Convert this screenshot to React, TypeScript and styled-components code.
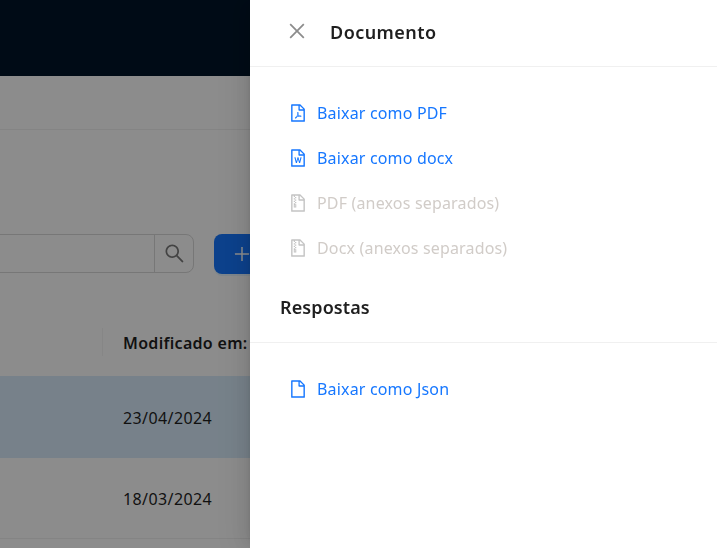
import styled, { createGlobalStyle } from 'styled-components';
import {
  AiOutlineClose,
  AiOutlineFile,
  AiOutlineFilePdf,
  AiOutlineFileWord,
  AiOutlineFileZip,
  AiOutlinePlus,
  AiOutlineSearch,
} from 'react-icons/ai';

const GlobalStyle = createGlobalStyle`
  html, body {
    margin: 0;
    height: 100%;
    overflow: hidden;
    background: #fff;
    font-family: "Noto Sans", "Open Sans", "Liberation Sans", sans-serif;
  }
`;

const App = () => {
  return (
    <>
      <GlobalStyle />
      <Page>
        <TopBar />
        <SubBar />
        <Toolbar>
          <SearchBox>
            <SearchInput />
            <SearchButton>
              <AiOutlineSearch />
            </SearchButton>
          </SearchBox>
          <AddButton>
            <AiOutlinePlus />
          </AddButton>
        </Toolbar>
        <TableHead>
          <HeadDivider />
          <HeadCell>Modificado em:</HeadCell>
        </TableHead>
        <Row $selected>
          <Cell>23/04/2024</Cell>
        </Row>
        <Row>
          <Cell>18/03/2024</Cell>
        </Row>
      </Page>

      <Backdrop />

      <Drawer>
        <DrawerHeader>
          <CloseButton>
            <AiOutlineClose />
          </CloseButton>
          <DrawerTitle>Documento</DrawerTitle>
        </DrawerHeader>
        <LinkList>
          <LinkItem>
            <AiOutlineFilePdf />
            Baixar como PDF
          </LinkItem>
          <LinkItem>
            <AiOutlineFileWord />
            Baixar como docx
          </LinkItem>
          <LinkItem $disabled>
            <AiOutlineFileZip />
            PDF (anexos separados)
          </LinkItem>
          <LinkItem $disabled>
            <AiOutlineFileZip />
            Docx (anexos separados)
          </LinkItem>
        </LinkList>
        <SectionTitle>Respostas</SectionTitle>
        <LinkList>
          <LinkItem>
            <AiOutlineFile />
            Baixar como Json
          </LinkItem>
        </LinkList>
      </Drawer>
    </>
  );
};

export default App;

const Page = styled.div`
  width: 717px;
  height: 548px;
  overflow: hidden;
  color: #1f1f1f;
`;

const TopBar = styled.div`
  height: 76px;
  background-color: #001529;
`;

const SubBar = styled.div`
  height: 54px;
  border-bottom: 1px solid #f0f0f0;
  box-sizing: border-box;
`;

const Toolbar = styled.div`
  height: 40px;
  margin-top: 104px;
  display: flex;
  align-items: flex-start;
`;

const SearchBox = styled.div`
  width: 194px;
  height: 39px;
  display: flex;
`;

const SearchInput = styled.div`
  flex: 1;
  border: 1px solid #d9d9d9;
  border-left: none;
`;

const SearchButton = styled.div`
  width: 40px;
  box-sizing: border-box;
  display: flex;
  align-items: center;
  justify-content: center;
  margin-left: -1px;
  border: 1px solid #d9d9d9;
  border-radius: 0 8px 8px 0;
  color: #7a7a7a;
  font-size: 23px;
`;

const AddButton = styled.div`
  width: 100px;
  height: 40px;
  margin-left: 20px;
  padding-left: 18px;
  box-sizing: border-box;
  display: flex;
  align-items: center;
  border-radius: 8px;
  background-color: #1677ff;
  box-shadow: 0 2px 0 rgba(5, 145, 255, 0.1);
  color: #fff;
  font-size: 20px;
`;

const TableHead = styled.div`
  height: 56px;
  margin-top: 40px;
  margin-bottom: 6px;
  padding-left: 102px;
  display: flex;
  align-items: center;
`;

const HeadDivider = styled.div`
  width: 1px;
  height: 28px;
  margin-right: 20px;
  background-color: #f5f5f5;
`;

const HeadCell = styled.div`
  padding-top: 2px;
  font-size: 16px;
  font-weight: 600;
  letter-spacing: 0.3px;
  white-space: nowrap;
`;

const Row = styled.div<{ $selected?: boolean }>`
  height: ${(p) => (p.$selected ? '82px' : '81px')};
  box-sizing: border-box;
  padding-left: 123px;
  display: flex;
  align-items: center;
  background-color: ${(p) => (p.$selected ? '#d9ecfb' : '#fff')};
  border-bottom: ${(p) => (p.$selected ? 'none' : '1px solid #f0f0f0')};
`;

const Cell = styled.div`
  padding-top: 1px;
  font-size: 16px;
  letter-spacing: 0.4px;
`;

const Backdrop = styled.div`
  position: fixed;
  inset: 0;
  background-color: rgba(0, 0, 0, 0.45);
`;

const Drawer = styled.div`
  position: fixed;
  top: 0;
  right: 0;
  bottom: 0;
  width: 467px;
  background-color: #fff;
  box-shadow: -6px 0 16px rgba(0, 0, 0, 0.08), -3px 0 6px -4px rgba(0, 0, 0, 0.12),
    -9px 0 28px 8px rgba(0, 0, 0, 0.05);
  color: #1f1f1f;
`;

const DrawerHeader = styled.div`
  height: 67px;
  box-sizing: border-box;
  padding-left: 36px;
  display: flex;
  align-items: center;
  border-bottom: 1px solid #f0f0f0;
`;

const CloseButton = styled.div`
  width: 22px;
  height: 22px;
  margin-right: 22px;
  margin-bottom: 5px;
  color: #8c8c8c;
  font-size: 22px;
  line-height: 0;
`;

const DrawerTitle = styled.div`
  margin-bottom: 3px;
  font-size: 18px;
  font-weight: 600;
  letter-spacing: 0.45px;
`;

const LinkList = styled.div`
  padding: 23px 0 0 38px;
`;

const LinkItem = styled.div<{ $disabled?: boolean }>`
  height: 45px;
  display: flex;
  align-items: center;
  gap: 9px;
  font-size: 16px;
  letter-spacing: 0.17px;
  white-space: nowrap;
  color: ${(p) => (p.$disabled ? '#d1ccc8' : '#1677ff')};

  svg {
    width: 20px;
    height: 20px;
    flex: none;
    color: ${(p) => (p.$disabled ? '#c4c4c4' : '#1677ff')};
  }
`;

const SectionTitle = styled.div`
  height: 72px;
  margin-top: 1px;
  box-sizing: border-box;
  padding: 24px 0 0 30px;
  border-bottom: 1px solid #f0f0f0;
  font-size: 18px;
  font-weight: 600;
  letter-spacing: 0.1px;
`;
